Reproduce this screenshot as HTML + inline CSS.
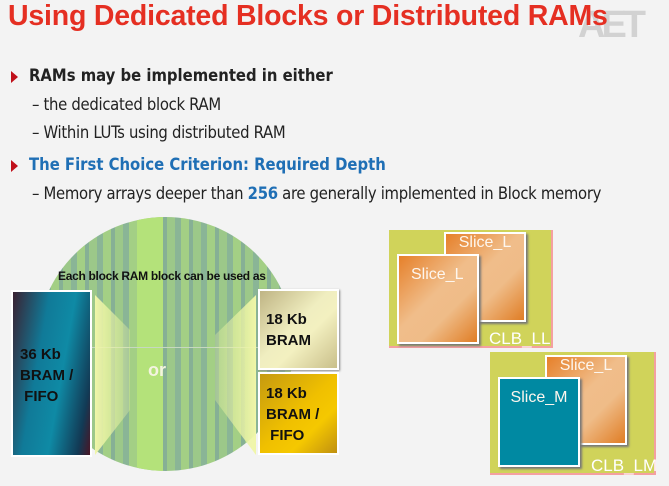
<!DOCTYPE html>
<html><head><style>
body{margin:0;width:669px;height:486px;background:#f3f3f3;position:relative;overflow:hidden;font-family:"Liberation Sans",sans-serif}
.a{position:absolute}
h1{position:absolute;left:8px;top:0px;margin:0;font-size:28.5px;color:#e52f22;font-weight:bold;letter-spacing:-0.2px;white-space:nowrap;z-index:2}
.t{position:absolute;font-family:"DejaVu Sans Condensed","Liberation Sans",sans-serif;color:#222;white-space:nowrap}
.b{font-size:16.5px;font-weight:bold}
.s{font-size:16.5px;letter-spacing:-0.3px}
.ar{position:absolute;width:0;height:0;border-top:6px solid transparent;border-bottom:6px solid transparent;border-left:7px solid #c0101a}
.slice{position:absolute;width:78px;height:86px;border:2px solid #fff;box-shadow:2px 2px 2px #777;background:linear-gradient(135deg,#e6802a 0%,#f0bd8a 45%,#efbc88 65%,#e07d25 100%);color:#fdf6ee;font-size:16px;text-align:center}
.clb{position:absolute;background:#d0d35a;border-right:2px solid #f4a0a0;border-bottom:2px solid #f4a0a0}
.bx{position:absolute;font-weight:bold;font-size:15px;color:#111;line-height:21px;border:2px solid #fff;box-sizing:border-box}
</style></head><body>
<div class="a" style="left:578px;top:4px;font-size:38px;font-weight:bold;color:#d2d2d2;letter-spacing:-4px">AET</div>
<h1>Using Dedicated Blocks or Distributed RAMs</h1>
<div class="ar" style="left:11px;top:71px"></div>
<div class="t b" style="left:29px;top:66px">RAMs may be implemented in either</div>
<div class="t s" style="left:32px;top:95px">– the dedicated block RAM</div>
<div class="t s" style="left:32px;top:123px">– Within LUTs using distributed RAM</div>
<div class="ar" style="left:11px;top:160px"></div>
<div class="t b" style="left:29px;top:155px;color:#1f6fb5">The First Choice Criterion: Required Depth</div>
<div class="t s" style="left:32px;top:184px">– Memory arrays deeper than <span style="color:#1f6fb5;font-weight:bold">256</span> are generally implemented in Block memory</div>

<div class="a" style="left:37px;top:217px;width:257px;height:254px;border-radius:50%;background:repeating-linear-gradient(90deg,#9cc889 0 8px,#8ab596 8px 14px,#a3cf85 14px 22px,#86b095 22px 26px);overflow:hidden">
<div class="a" style="left:100px;top:0;width:26px;height:254px;background:#b4e27a"></div>
<div class="a" style="left:0;top:130px;width:257px;height:1px;background:#c6d8c0"></div>
</div>
<svg class="a" style="left:0;top:0" width="669" height="486"><defs><linearGradient id="g1" x1="0" x2="1"><stop offset="0" stop-color="#f0f6a8"/><stop offset="1" stop-color="#e8f2a0" stop-opacity=".3"/></linearGradient><linearGradient id="g2" x1="1" x2="0"><stop offset="0" stop-color="#f0f6a8"/><stop offset="1" stop-color="#e8f2a0" stop-opacity=".3"/></linearGradient></defs><polygon points="95,295 130,330 130,410 95,455" fill="url(#g1)"/><polygon points="256,295 215,335 215,400 256,455" fill="url(#g2)"/></svg>
<div class="a" style="left:58px;top:269px;font-size:12px;font-weight:bold;color:#111;letter-spacing:-0.3px">Each block RAM block can be used as</div>
<div class="a" style="left:148px;top:360px;font-size:18px;font-weight:bold;color:#f4f4e0">or</div>
<div class="bx" style="left:11px;top:290px;width:81px;height:167px;background:linear-gradient(100deg,#3a2232 0%,#107a98 35%,#0f8aa5 60%,#123a55 88%,#4a1525 100%);padding:52px 0 0 7px">36 Kb<br>BRAM /<br>&nbsp;FIFO</div>
<div class="bx" style="left:258px;top:289px;width:81px;height:81px;background:linear-gradient(135deg,#bfb484 0%,#f0eec0 45%,#f3f0c0 60%,#c9bf8a 100%);padding:18px 0 0 6px;box-shadow:1px 1px 2px #888">18 Kb<br>BRAM</div>
<div class="bx" style="left:258px;top:372px;width:81px;height:83px;background:linear-gradient(135deg,#c59a10 0%,#f0c000 50%,#f5c800 70%,#c09010 100%);padding:9px 0 0 6px">18 Kb<br>BRAM /<br>&nbsp;FIFO</div>

<div class="clb" style="left:389px;top:230px;width:162px;height:116px"></div>
<div class="slice" style="left:444px;top:232px">Slice_L</div>
<div class="slice" style="left:397px;top:254px;text-align:left"><div style="margin:10px 0 0 12px">Slice_L</div></div>
<div class="a" style="left:489px;top:329px;font-size:17px;color:#fff">CLB_LL</div>
<div class="clb" style="left:490px;top:352px;width:164px;height:121px"></div>
<div class="slice" style="left:545px;top:355px">Slice_L</div>
<div class="slice" style="left:498px;top:377px;background:#0089a2"><div style="margin-top:10px">Slice_M</div></div>
<div class="a" style="left:591px;top:456px;font-size:17px;color:#fff">CLB_LM</div>
</body></html>
